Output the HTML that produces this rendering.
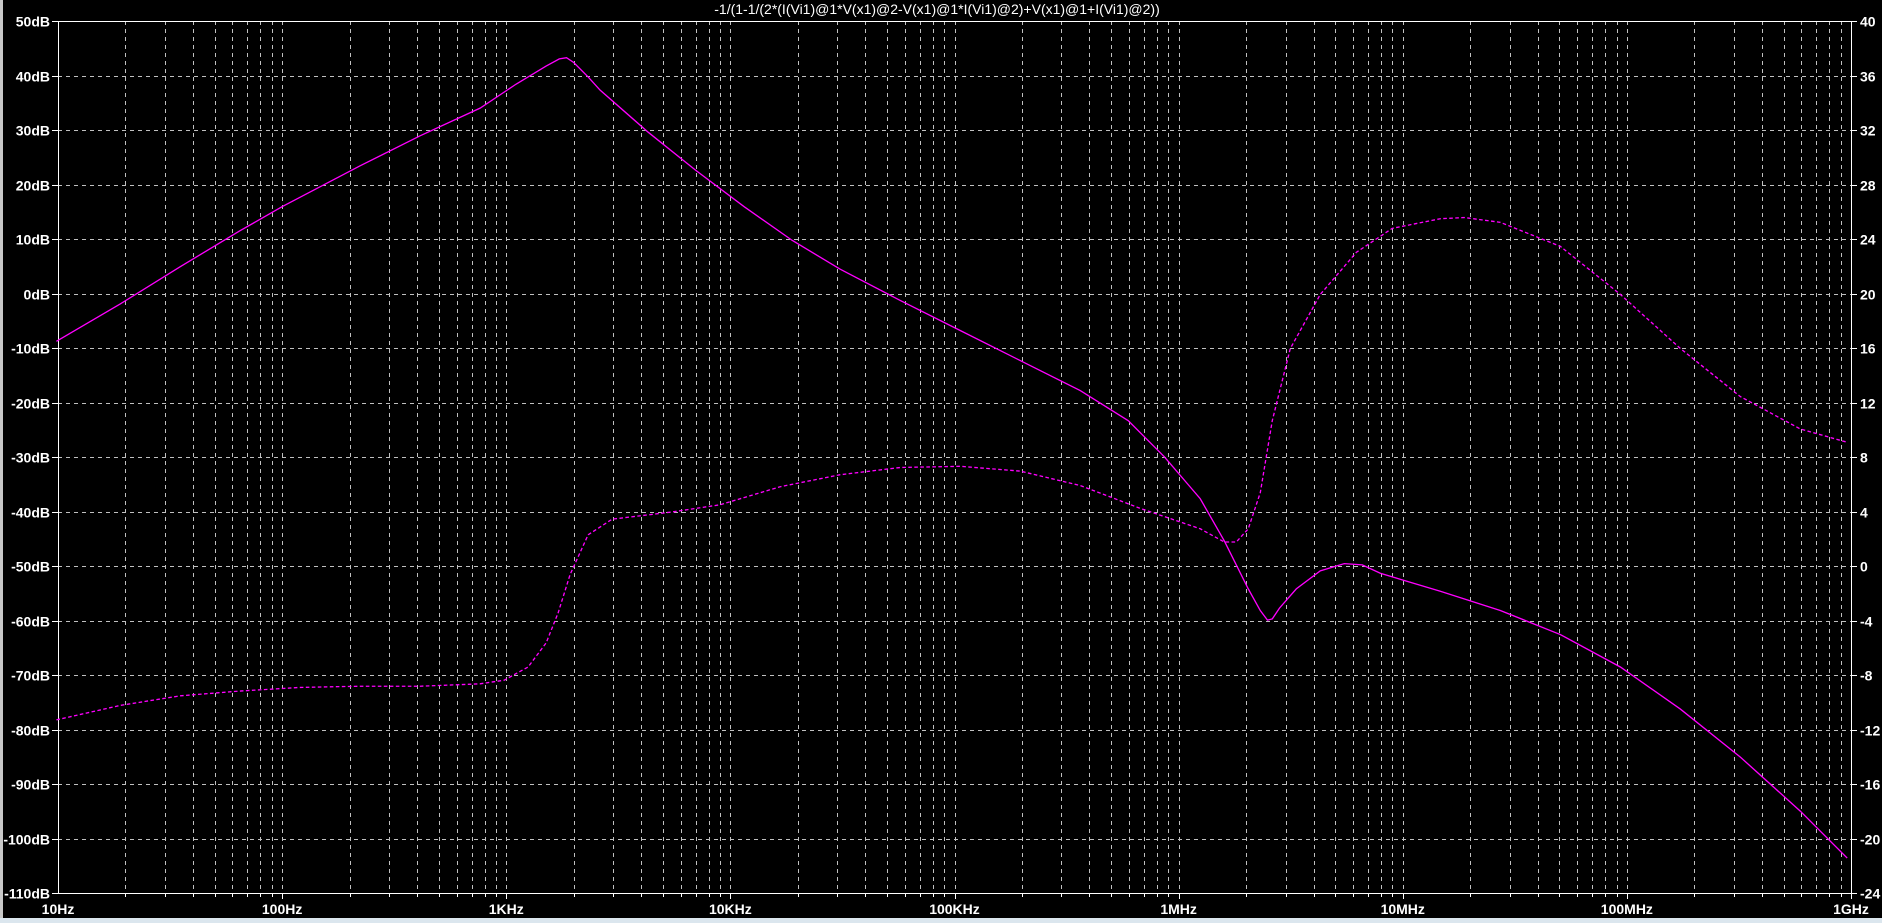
<!DOCTYPE html>
<html><head><style>
html,body{margin:0;padding:0;background:#000;overflow:hidden}
svg{display:block}
text{font-family:"Liberation Sans",sans-serif;font-weight:bold;font-size:14px;fill:#fff}
</style></head><body>
<svg id="s" width="1882" height="923" xmlns="http://www.w3.org/2000/svg">
<rect x="0" y="0" width="1882" height="923" fill="#000"/>
<rect x="0" y="0" width="3" height="923" fill="#c8c8c8"/>
<rect x="0" y="918" width="1882" height="5" fill="#dbe6ee"/>
<g id="g"></g>
<text x="937" y="14" text-anchor="middle" style="font-weight:normal;font-size:14px">-1/(1-1/(2*(I(Vi1)@1*V(x1)@2-V(x1)@1*I(Vi1)@2)+V(x1)@1+I(Vi1)@2))</text>
<g transform="scale(1.20026,1.2018)" fill="none" stroke="#ff00ff" stroke-width="1.1">
<polyline points="47,284 100,253 150,222 200,192 235,172 300,138 350,113 400,90 430,70 455,55 466,49 472,48 478,52 490,64 500,75 540,110 580,142 620,172 660,200 700,224 750,250 800,275 850,300 900,325 940,350 970,380 1000,415 1020,450 1040,490 1050,508 1056,516 1060,515 1066,506 1080,490 1100,475 1120,469 1135,470 1150,477 1200,492 1250,508 1300,528 1350,555 1400,590 1450,630 1500,675 1539,714"/>
<polyline stroke-dasharray="3,2" points="47,599 100,587 150,579 200,575 250,572 300,571 350,571 400,569 420,566 440,555 455,535 465,510 475,478 490,445 510,432 560,426 600,420 650,405 700,395 750,389 800,388 850,392 900,404 950,423 1000,440 1020,451 1030,451 1040,440 1050,410 1060,350 1075,290 1100,245 1130,210 1160,190 1200,182 1220,181 1250,185 1300,205 1350,245 1400,290 1450,330 1500,357 1539,368"/>
</g>
</svg>
<script>
var g=document.getElementById('g'),ns='http://www.w3.org/2000/svg';
var L=58,R=1851,T=21,B=893,D=(R-L)/8,H=(B-T)/16;
function el(n,a,t){var e=document.createElementNS(ns,n);for(var k in a)e.setAttribute(k,a[k]);if(t)e.textContent=t;g.appendChild(e);}
var dash={stroke:'#c0c0c0','stroke-width':1,'stroke-dasharray':'4,4'};
for(var i=1;i<16;i++){var y=Math.round(T+i*H)+.5;el('line',Object.assign({x1:L,x2:R,y1:y,y2:y},dash));}
for(var d=0;d<8;d++)for(var m=1;m<10;m++){if(d==0&&m==1)continue;var x=Math.round(L+D*(d+Math.log10(m)))+.5;el('line',Object.assign({x1:x,x2:x,y1:T,y2:B},dash));el('line',{x1:x,x2:x,y1:B,y2:B+(m==1?6:4),stroke:'#fff'});}
el('line',{x1:R+.5,x2:R+.5,y1:B,y2:B+6,stroke:'#fff'});
el('rect',{x:L+.5,y:T+.5,width:R-L,height:B-T,fill:'none',stroke:'#fff','stroke-width':1});
var fl=['10Hz','100Hz','1KHz','10KHz','100KHz','1MHz','10MHz','100MHz','1GHz'];
for(var d=0;d<=8;d++)el('text',{x:L+D*d,y:914,'text-anchor':'middle'},fl[d]);
for(var i=0;i<=16;i++){var y=Math.round(T+i*H)+.5;
el('line',{x1:L-6,x2:L,y1:y,y2:y,stroke:'#fff'});el('line',{x1:R,x2:R+6,y1:y,y2:y,stroke:'#fff'});
el('text',{x:L-8,y:y+5,'text-anchor':'end'},(50-10*i)+'dB');
el('text',{x:R+9,y:y+5},''+(40-4*i));}
</script>
</body></html>
